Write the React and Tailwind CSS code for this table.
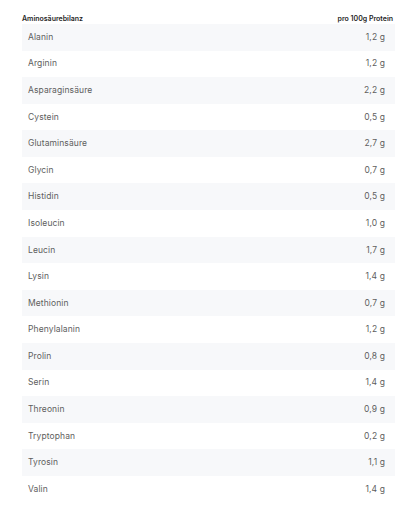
import React from "react";

const rows = [
  ["Alanin", "1,2 g"],
  ["Arginin", "1,2 g"],
  ["Asparaginsäure", "2,2 g"],
  ["Cystein", "0,5 g"],
  ["Glutaminsäure", "2,7 g"],
  ["Glycin", "0,7 g"],
  ["Histidin", "0,5 g"],
  ["Isoleucin", "1,0 g"],
  ["Leucin", "1,7 g"],
  ["Lysin", "1,4 g"],
  ["Methionin", "0,7 g"],
  ["Phenylalanin", "1,2 g"],
  ["Prolin", "0,8 g"],
  ["Serin", "1,4 g"],
  ["Threonin", "0,9 g"],
  ["Tryptophan", "0,2 g"],
  ["Tyrosin", "1,1 g"],
  ["Valin", "1,4 g"],
];

export default function App() {
  return (
    <div className="w-[420px] h-[512px] bg-white font-['Inter',sans-serif] pt-[12px] pl-[22px] pr-[25px]">
      <div className="flex justify-between items-end h-[12px] text-[7px] font-semibold text-[#1f1f1f] pr-[2px]">
        <span>Aminosäurebilanz</span>
        <span>pro 100g Protein</span>
      </div>
      <div className="flex flex-col">
        {rows.map(([name, val], i) => (
          <div
            key={name}
            className={
              "flex justify-between items-center h-[26.58px] pl-[6px] pr-[10px] text-[8.5px] text-[#5e5e5e] tracking-[0.1px] " +
              (i % 2 === 0 ? "bg-[#f7f8fa]" : "bg-white")
            }
          >
            <span>{name}</span>
            <span>{val}</span>
          </div>
        ))}
      </div>
    </div>
  );
}
